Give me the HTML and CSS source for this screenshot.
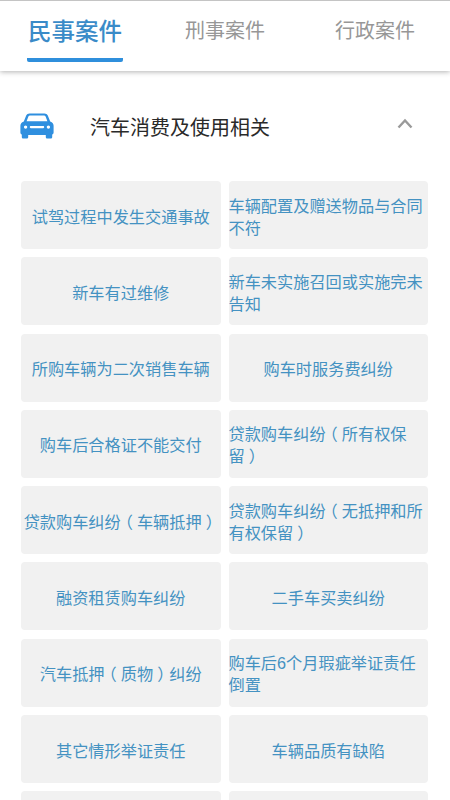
FILE: index.html
```html
<!DOCTYPE html>
<html lang="zh-Hans">
<head>
<meta charset="utf-8">
<title>案件</title>
<link rel="stylesheet" href="styles.css">
</head>
<body>
<header class="tabs">
  <div class="tab active"><span class="tab-label">民事案件</span></div>
  <div class="tab"><span class="tab-label">刑事案件</span></div>
  <div class="tab"><span class="tab-label">行政案件</span></div>
</header>
<section class="section-head">
  <svg class="car" viewBox="0 0 34 26" aria-hidden="true">
    <path fill="#2f8fdf" fill-rule="evenodd" d="M9.5 0.5H24.5C26 0.5 27.2 1.2 27.8 2.6L30.2 8.4C32.6 9.4 33.6 10.8 33.6 12.8V19.5C33.6 20.6 33 21.3 32.2 21.6V24C32.2 25 31.5 25.6 30.6 25.6H27.4C26.5 25.6 25.8 25 25.8 24V22H8.2V24C8.2 25 7.5 25.6 6.6 25.6H3.4C2.5 25.6 1.8 25 1.8 24V21.6C1 21.3 0.4 20.6 0.4 19.5V12.8C0.4 10.8 1.4 9.4 3.8 8.4L6.2 2.6C6.8 1.2 8 0.5 9.5 0.5ZM10 2.6C9.2 2.6 8.7 2.9 8.4 3.6L6.6 8.2H27.4L25.6 3.6C25.3 2.9 24.8 2.6 24 2.6ZM5.6 12.4A1.7 1.7 0 1 0 5.6 15.8A1.7 1.7 0 1 0 5.6 12.4ZM28.4 12.4A1.7 1.7 0 1 0 28.4 15.8A1.7 1.7 0 1 0 28.4 12.4ZM10.8 13C10.2 13 9.8 13.5 9.8 14.1C9.8 14.7 10.2 15.2 10.8 15.2H23.2C23.8 15.2 24.2 14.7 24.2 14.1C24.2 13.5 23.8 13 23.2 13Z"/>
  </svg>
  <h2 class="section-title">汽车消费及使用相关</h2>
  <svg class="chevron" viewBox="0 0 16 11" aria-hidden="true">
    <path d="M1.5 9.5L8 2.5L14.5 9.5" fill="none" stroke="#9a9a9a" stroke-width="2.4"/>
  </svg>
</section>
<main class="grid">
  <a class="card"><span>试驾过程中发生交通事故</span></a>
  <a class="card"><span>车辆配置及赠送物品与合同不符</span></a>
  <a class="card"><span>新车有过维修</span></a>
  <a class="card"><span>新车未实施召回或实施完未告知</span></a>
  <a class="card"><span>所购车辆为二次销售车辆</span></a>
  <a class="card"><span>购车时服务费纠纷</span></a>
  <a class="card"><span>购车后合格证不能交付</span></a>
  <a class="card"><span class="lines"><span class="line">贷款购车纠纷<span class="paren">（</span>所有权保</span><span class="line">留<span class="paren">）</span></span></span></a>
  <a class="card"><span>贷款购车纠纷<span class="paren">（</span>车辆抵押<span class="paren">）</span></span></a>
  <a class="card"><span class="lines"><span class="line">贷款购车纠纷<span class="paren">（</span>无抵押和所</span><span class="line">有权保留<span class="paren">）</span></span></span></a>
  <a class="card"><span>融资租赁购车纠纷</span></a>
  <a class="card"><span>二手车买卖纠纷</span></a>
  <a class="card"><span>汽车抵押<span class="paren">（</span>质物<span class="paren">）</span>纠纷</span></a>
  <a class="card"><span>购车后6个月瑕疵举证责任倒置</span></a>
  <a class="card"><span>其它情形举证责任</span></a>
  <a class="card"><span>车辆品质有缺陷</span></a>
  <a class="card"></a>
  <a class="card"></a>
</main>
</body>
</html>
```
FILE: styles.css
```css
html, body {
  margin: 0;
  height: 800px;
  overflow: hidden;
  background: #fff;
  font-family: "Noto Sans CJK SC", "Noto Sans", sans-serif;
}
.tabs {
  display: grid;
  grid-template-columns: repeat(3, 150px);
  height: 70px;
  border-top: 1px solid #c4c4c4;
  box-shadow: 0 1px 5px rgba(0, 0, 0, 0.3);
  color: #979797;
  font-size: 20px;
}
.tab {
  display: flex;
  justify-content: center;
  height: 100%;
}
.tab-label {
  height: 57px;
  line-height: 58px;
}
.tab.active .tab-label {
  width: 96px;
  text-align: center;
  font-size: 23.5px;
  font-weight: 500;
  color: #3a8bc8;
  border-bottom: 4px solid #2f8fdc;
  border-radius: 0 0 2px 2px;
}
.section-head {
  display: flex;
  align-items: center;
  height: 110px;
  padding: 0 37px 0 20px;
}
.car {
  width: 34px;
  height: 26px;
  flex: none;
}
.section-title {
  flex: 1;
  margin: 0 0 0 36px;
  font-size: 20px;
  font-weight: 400;
  color: #2a2a2a;
}
.chevron {
  width: 16px;
  height: 11px;
  margin-bottom: 6px;
  flex: none;
}
.grid {
  display: grid;
  grid-template-columns: 199.5px 199.5px;
  grid-auto-rows: 68px;
  column-gap: 8px;
  row-gap: 8.3px;
  padding-left: 21px;
}
.card {
  display: flex;
  align-items: center;
  justify-content: center;
  box-sizing: border-box;
  padding-top: 3px;
  background: #f1f1f1;
  border-radius: 4px;
  color: #4492c2;
  font-family: "Liberation Sans", "Noto Sans CJK SC", sans-serif;
  font-size: 16.2px;
  line-height: 22px;
}
.lines {
  width: 100%;
}
.line {
  display: block;
}
.paren {
  font-feature-settings: "halt";
  padding: 0 0.25em;
}
```
